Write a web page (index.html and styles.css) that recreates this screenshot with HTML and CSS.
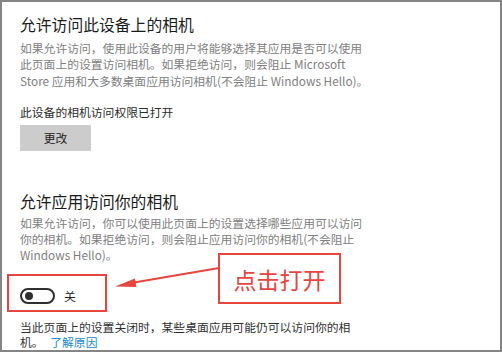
FILE: index.html
```html
<!DOCTYPE html>
<html lang="zh-CN">
<head>
<meta charset="utf-8">
<title>相机</title>
<link rel="stylesheet" href="styles.css">
</head>
<body>
<div class="frame">
  <h2 class="title">允许访问此设备上的相机</h2>
  <p class="desc">如果允许访问，使用此设备的用户将能够选择其应用是否可以使用<br>此页面上的设置访问相机。如果拒绝访问，则会阻止 Microsoft<br>Store 应用和大多数桌面应用访问相机(不会阻止 Windows Hello)。</p>
  <p class="status">此设备的相机访问权限已打开</p>
  <button class="btn">更改</button>

  <h2 class="title title-2">允许应用访问你的相机</h2>
  <p class="desc desc-2">如果允许访问，你可以使用此页面上的设置选择哪些应用可以访问<br>你的相机。如果拒绝访问，则会阻止应用访问你的相机(不会阻止<br>Windows Hello)。</p>
  <div class="toggle-row">
    <span class="toggle"><span class="knob"></span></span>
    <span class="toggle-label">关</span>
  </div>
  <p class="note">当此页面上的设置关闭时，某些桌面应用可能仍可以访问你的相<br>机。 <a class="link" href="#">了解原因</a></p>

  <div class="mark-box"></div>
  <div class="callout">点击打开</div>
  <svg class="arrow" width="502" height="352" viewBox="0 0 502 352">
    <line x1="134" y1="282.5" x2="219" y2="268" stroke="#e8453f" stroke-width="2"/>
    <polygon points="115,286.5 136.4,287 135,278.4" fill="#e8453f"/>
  </svg>
</div>
</body>
</html>
```
FILE: styles.css
```css
html, body {
  margin: 0;
  padding: 0;
  background: #fff;
}

.frame {
  position: relative;
  width: 502px;
  height: 352px;
  box-sizing: border-box;
  border: 2px solid #858585;
  padding: 12px 0 0 18px;
  overflow: hidden;
  background: #fff;
  font-family: "Noto Sans CJK SC", "Noto Sans", sans-serif;
  color: #222;
}

.title {
  margin: 0;
  font-size: 15.8px;
  line-height: 22px;
  font-weight: 400;
  color: #1b1b1b;
}

.title-2 {
  margin-top: 40px;
}

.desc {
  margin: 4px 0 0;
  font-size: 11.8px;
  line-height: 16.4px;
  color: #808080;
}

.desc-2 {
  margin-top: 2px;
}

.status {
  margin: 15px 0 0;
  font-size: 11.8px;
  line-height: 16.4px;
  color: #2b2b2b;
}

.btn {
  display: flex;
  align-items: center;
  justify-content: center;
  margin-top: 4px;
  width: 71px;
  height: 26px;
  padding: 0;
  border: none;
  background: #cccccc;
  font-family: inherit;
  font-size: 11.8px;
  color: #222;
}

.toggle-row {
  display: flex;
  align-items: center;
  gap: 9px;
  margin-top: 24px;
  height: 16px;
}

.toggle {
  display: flex;
  align-items: center;
  width: 35px;
  height: 16px;
  box-sizing: border-box;
  border: 2px solid #2e2e2e;
  border-radius: 8px;
  padding-left: 3px;
}

.knob {
  width: 8px;
  height: 8px;
  border-radius: 50%;
  background: #2e2e2e;
}

.toggle-label {
  font-size: 11.8px;
  color: #222;
}

.note {
  margin: 15px 0 0;
  font-size: 11.8px;
  line-height: 15.5px;
  color: #2f2f2f;
}

.link {
  color: #2389d0;
  text-decoration: none;
  margin-left: 4px;
}

.mark-box {
  position: absolute;
  left: 5px;
  top: 272px;
  width: 100px;
  height: 38px;
  box-sizing: border-box;
  border: 2px solid #e8453f;
}

.callout {
  position: absolute;
  left: 216px;
  top: 251px;
  width: 123px;
  height: 51px;
  box-sizing: border-box;
  border: 2px solid #e8453f;
  background: #fff;
  display: flex;
  align-items: center;
  justify-content: center;
  color: #e8453f;
  font-size: 23px;
}

.arrow {
  position: absolute;
  left: -2px;
  top: -2px;
  pointer-events: none;
}
```
